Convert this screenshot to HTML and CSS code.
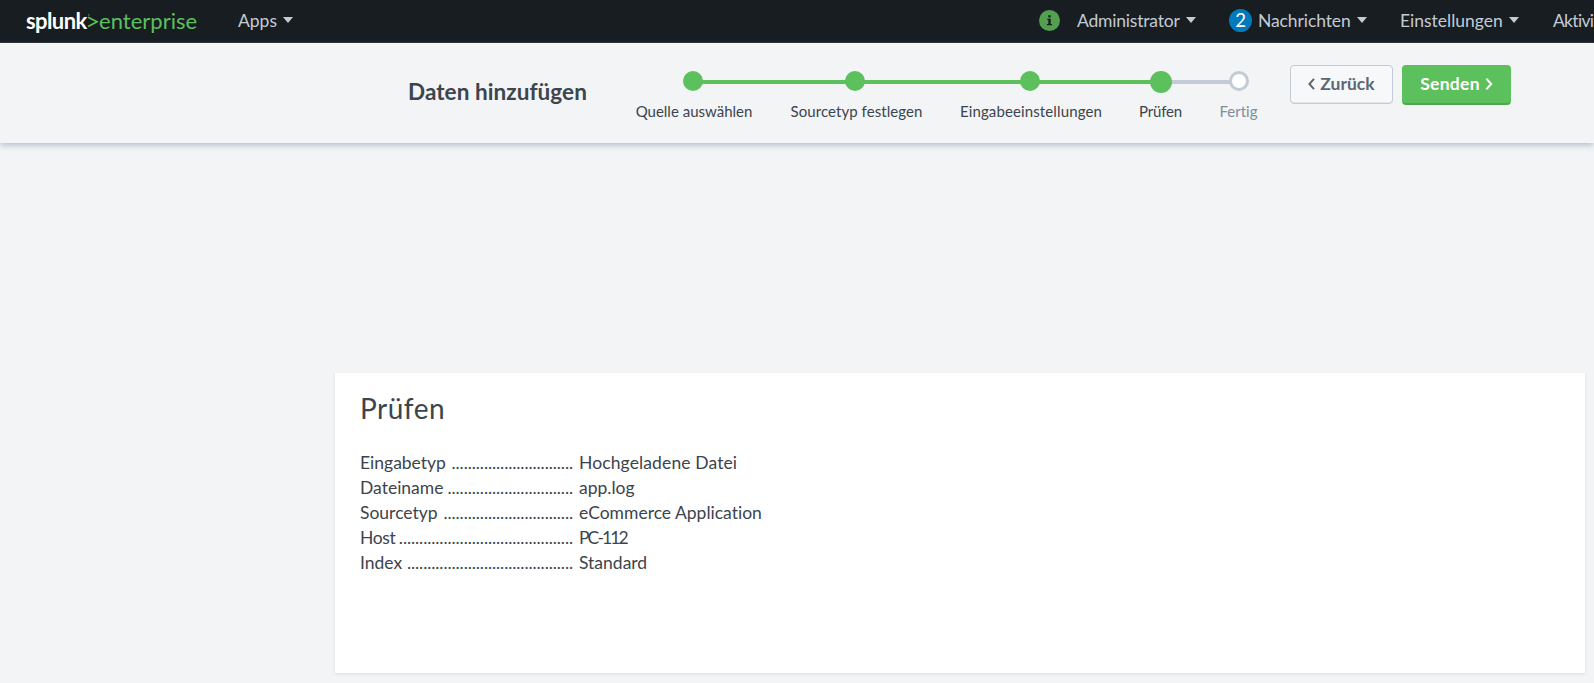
FILE: index.html
```
<!DOCTYPE html>
<html lang="de">
<head>
<meta charset="utf-8">
<title>Daten hinzufügen | Splunk</title>
<link rel="stylesheet" href="styles.css">
</head>
<body>
<nav class="nav">
  <div class="logo"><span class="logo-name">splunk</span><svg class="logo-mark" width="12" height="14" viewBox="0 0 12 14"><path d="M1.2 3.2 10 7.7 1.2 12.4" fill="none" stroke="currentColor" stroke-width="1.7"/><circle cx="1.8" cy=".9" r=".7" fill="currentColor"/></svg><span class="logo-edition">enterprise</span></div>
  <div class="item apps"><span>Apps</span><i class="caret"></i></div>
  <div class="info"><svg width="21" height="21" viewBox="0 0 21 21"><circle cx="10.5" cy="10.5" r="10.5" fill="#53a051"/><path d="M9.3 5.3h2.3v2.1H9.3zM8.2 8.8h3.5v5.1h1.4v1.3H7.9v-1.3h1.4v-3.8H8.2z" fill="#171d21"/></svg></div>
  <div class="item admin"><span>Administrator</span><i class="caret"></i></div>
  <div class="item messages"><b class="count">2</b><span>Nachrichten</span><i class="caret"></i></div>
  <div class="item settings"><span>Einstellungen</span><i class="caret"></i></div>
  <div class="item activity"><span>Aktivi</span></div>
</nav>
<header class="wizard">
  <h1 class="wizard-title">Daten hinzufügen</h1>
  <ol class="steps">
    <li class="step source"><i class="dot"></i><span>Quelle auswählen</span></li>
    <li class="step type"><i class="dot"></i><span>Sourcetyp festlegen</span></li>
    <li class="step input"><i class="dot"></i><span>Eingabeeinstellungen</span></li>
    <li class="step review"><i class="dot"></i><span>Prüfen</span></li>
    <li class="step done"><i class="dot"></i><span>Fertig</span></li>
  </ol>
  <div class="buttons">
    <button class="btn back"><svg width="7" height="12" viewBox="0 0 7 12"><path d="M6 .8 1.4 6 6 11.2"/></svg><span>Zurück</span></button>
    <button class="btn send"><span>Senden</span><svg width="8" height="12" viewBox="0 0 8 12"><path d="M1.4 .8 6.2 6 1.4 11.2"/></svg></button>
  </div>
</header>
<main class="card">
  <h2 class="card-title">Prüfen</h2>
  <dl class="summary">
    <dt><span class="key">Eingabetyp</span><span class="leader">..............................</span></dt><dd class="file">Hochgeladene Datei</dd>
    <dt><span class="key">Dateiname</span><span class="leader">...............................</span></dt><dd>app.log</dd>
    <dt><span class="key">Sourcetyp</span><span class="leader">................................</span></dt><dd>eCommerce Application</dd>
    <dt><span class="key host">Host</span><span class="leader">...........................................</span></dt><dd class="machine">PC-112</dd>
    <dt><span class="key">Index</span><span class="leader">.........................................</span></dt><dd>Standard</dd>
  </dl>
</main>
</body>
</html>
```
FILE: styles.css
```
* { box-sizing: border-box; }
body {
  margin: 0;
  height: 683px;
  overflow: hidden;
  background: #f2f4f5;
  color: #3c444d;
  font: 17.5px/25px Lato, "Open Sans", sans-serif;
  font-variant-ligatures: none;
}
.nav {
  display: flex;
  align-items: center;
  height: 43px;
  padding: 0 0 2px 26px;
  overflow: hidden;
  background: #171d21;
  border-bottom: 1px solid #2b3033;
  color: #c3cbd4;
  white-space: nowrap;
}
.logo { display: flex; align-items: center; flex: none; width: 212px; font-size: 22px; color: #5cc05c; }
.logo-name { width: 61px; color: #fff; font-weight: 700; letter-spacing: -.6px; }
.logo-mark { width: 12px; margin: 1px 0 0; }
.logo-edition { letter-spacing: .03px; }
.item { display: flex; align-items: center; flex: none; }
.caret {
  margin: 0 0 0 6px;
  border: 5px solid transparent;
  border-top: 6px solid #c3cbd4;
  border-bottom: 0;
}
.apps { width: 801px; }
.info { display: flex; flex: none; width: 38px; padding-top: 1px; }
.admin { width: 152px; }
.admin span { letter-spacing: -.2px; }
.messages { width: 171px; }
.messages span { margin-left: 6px; letter-spacing: -.1px; }
.count {
  display: grid;
  place-items: center;
  width: 23px;
  height: 23px;
  border-radius: 50%;
  background: #007abd;
  color: #fff;
  font-weight: 400;
  font-size: 18.5px;
  line-height: 23px;
}
.settings { width: 153px; }
.activity { letter-spacing: -.7px; }

.wizard {
  display: flex;
  height: 100px;
  padding-left: 408px;
  background: #f2f4f5;
  box-shadow: 0 2px 6px rgba(80, 105, 140, .4);
}
.wizard-title { flex: none; width: 227px; margin: 36px 0 0; font-size: 22.5px; line-height: 25px; font-weight: 700; letter-spacing: .07px; }
.steps { display: flex; flex: none; gap: 37px; margin: 28px 0 0; padding: 0; list-style: none; font-size: 15px; line-height: 20px; white-space: nowrap; }
.step { position: relative; display: flex; flex-direction: column; align-items: center; }
.step span { margin-top: 10px; }
.dot { position: relative; z-index: 1; width: 20px; height: 20px; border-radius: 50%; background: #5cc05c; }
.source .dot { left: -1px; }
.type .dot { left: -2px; }
.input .dot { left: -1px; }
.step::before, .step::after { content: ""; position: absolute; top: 9px; height: 4px; background: #5cc05c; }
.step::before { left: -19px; right: 50%; }
.step::after { left: 50%; right: -19px; }
.source::before, .done::after { display: none; }
.source { width: 118px; }
.type { width: 133px; }
.type span { letter-spacing: .07px; }
.input { width: 142px; }
.input span { letter-spacing: .12px; }
.review { width: 43px; }
.review span { margin-top: 8px; letter-spacing: -.2px; }
.review .dot { width: 22px; height: 22px; }
.review::after, .done::before { background: #c3cbd4; }
.done { width: 39px; color: #818d99; }
.done .dot { border: 3px solid #c3cbd4; background: #fff; }

.buttons { display: flex; align-items: flex-start; gap: 9px; margin: 22px 0 0 32px; }
.btn {
  display: flex;
  align-items: center;
  justify-content: center;
  gap: 5px;
  padding: 0 0 1px;
  border: 1px solid #c3cbd4;
  border-radius: 4px;
  font: 700 17.5px/24px Lato, sans-serif;
  color: #5c6773;
}
.btn svg { fill: none; stroke: currentColor; stroke-width: 2; }
.back { width: 103px; height: 39px; background: #f7f8fa; box-shadow: inset 0 -1px #e1e6eb; }
.send { width: 109px; height: 40px; background: #5cc05c; border-color: #5cc05c; border-bottom: 2px solid #4fa851; color: #fff; }
.send span { letter-spacing: .3px; }

.card {
  width: 1250px;
  height: 300px;
  margin: 230px 0 0 335px;
  padding: 20px 25px;
  background: #fff;
  box-shadow: 0 1px 3px rgba(60, 80, 100, .12);
}
.card-title { margin: 0; font-size: 28px; line-height: 31px; font-weight: 400; letter-spacing: .5px; }
.summary { display: grid; grid-template-columns: 213px 1fr; column-gap: 6px; margin: 26px 0 0; }
.summary dt { display: flex; justify-content: space-between; }
.summary dd { margin: 0; }
.leader { letter-spacing: -.08px; }
.host { letter-spacing: -.4px; }
.file { letter-spacing: .12px; }
.machine { letter-spacing: -1.9px; }
```
